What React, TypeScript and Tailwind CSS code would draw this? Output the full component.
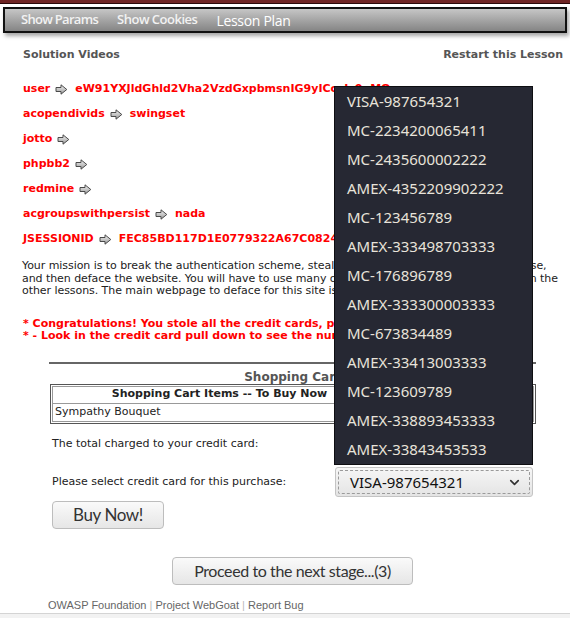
import { ChevronDown } from "lucide-react";

const cookies: [string, string][] = [
  ["user", "eW91YXJldGhld2Vha2VzdGxpbmsnIG9yICcxJz0nMQ=="],
  ["acopendivids", "swingset"],
  ["jotto", ""],
  ["phpbb2", ""],
  ["redmine", ""],
  ["acgroupswithpersist", "nada"],
  ["JSESSIONID", "FEC85BD117D1E0779322A67C082402EB"],
];

const cards = [
  "VISA-987654321",
  "MC-2234200065411",
  "MC-2435600002222",
  "AMEX-4352209902222",
  "MC-123456789",
  "AMEX-333498703333",
  "MC-176896789",
  "AMEX-333300003333",
  "MC-673834489",
  "AMEX-33413003333",
  "MC-123609789",
  "AMEX-338893453333",
  "AMEX-33843453533",
];

function Arrow() {
  return (
    <svg width="13" height="11" viewBox="0 0 13 11" className="shrink-0">
      <defs>
        <linearGradient id="ag" x1="0" y1="0" x2="0" y2="1">
          <stop offset="0" stopColor="#f2f2f2" />
          <stop offset="1" stopColor="#9a9a9a" />
        </linearGradient>
      </defs>
      <polygon
        points="1,3.5 6,3.5 6,0.8 11.8,5.5 6,10.2 6,7.5 1,7.5"
        fill="url(#ag)"
        stroke="#4a4a4a"
        strokeWidth="1"
        strokeLinejoin="round"
      />
    </svg>
  );
}

export default function App() {
  return (
    <div className="relative min-h-[618px] w-full overflow-hidden bg-white font-['DejaVu_Sans',Verdana,sans-serif] text-[11px] text-[#222]">
      <div className="h-[3px] bg-[#6e2424]" />
      <div className="h-px bg-[#2a0808]" />

      {/* nav */}
      <div className="mx-[3px] mt-[3px] flex h-[26px] items-center gap-[19px] border-2 border-[#111] bg-gradient-to-b from-[#c6c6c6] to-[#858585] pl-[16px] font-['Open_Sans',sans-serif] shadow-[2px_3px_4px_rgba(0,0,0,0.35)]">
        <span className="text-[13px] font-semibold tracking-[-0.7px] text-[#f2f2f2]">Show Params</span>
        <span className="text-[13px] font-semibold tracking-[-0.5px] text-[#f2f2f2]">Show Cookies</span>
        <span className="text-[14px] tracking-[-0.3px] text-white">Lesson Plan</span>
      </div>

      <div className="mt-[15px] flex justify-between pl-[23px] pr-[7px] font-bold leading-[13px] text-[#555]">
        <span>Solution Videos</span>
        <span>Restart this Lesson</span>
      </div>

      {/* cookies */}
      <div className="mt-[16px] pl-[23px] font-bold text-[#f00]">
        {cookies.map(([k, v]) => (
          <div key={k} className="flex h-[25px] items-center gap-[5px] whitespace-nowrap">
            <span>{k}</span>
            <Arrow />
            {v && <span className="ml-[2px]">{v}</span>}
          </div>
        ))}
      </div>

      <p className="mt-[8px] pl-[22px] pr-[2px] leading-[12.5px] tracking-[-0.06px]">
        Your mission is to break the authentication scheme, steal all the credit cards from the database,
        and then deface the website. You will have to use many of the techniques you have learned in the
        other lessons. The main webpage to deface for this site is 'webgoat_challenge_guest.jsp'
      </p>

      <div className="mt-[20px] pl-[23px] font-bold leading-[12.5px] text-[#f00]">
        <div>* Congratulations! You stole all the credit cards, proceed to the next stage.</div>
        <div>* - Look in the credit card pull down to see the numbers.</div>
      </div>

      {/* shopping cart */}
      <div className="ml-[49px] mt-[19px] w-[487px]">
        <div className="h-[2px] bg-[#666]" />
        <div className="mt-[6px] text-center text-[12px] font-bold leading-[14px] text-[#555]">Shopping Cart</div>
        <div className="ml-px border border-[#555] p-px">
          <div className="flex h-[18px] border border-[#999]">
            <div className="flex w-[334px] items-center justify-center border-r border-[#999] font-bold">
              Shopping Cart Items -- To Buy Now
            </div>
            <div className="flex-1 border-r border-[#999] text-center font-bold">Price</div>
            <div className="flex-1 text-center font-bold">Quantity</div>
          </div>
          <div className="flex h-[18px] border-x border-b border-[#999]">
            <div className="flex w-[334px] items-center pl-[2px]">Sympathy Bouquet</div>
            <div className="flex-1 text-right">69.99</div>
          </div>
        </div>
      </div>

      {/* form */}
      <div className="ml-[52px] mt-[8px] flex h-[26px] items-center">The total charged to your credit card:</div>
      <div className="ml-[52px] mt-[9px] flex h-[31px] items-center">
        <span className="w-[283px]">Please select credit card for this purchase:</span>
        <div className="relative">
          <div className="flex h-[30px] w-[198px] items-center justify-between rounded-[3px] border border-[#c4c4c4] bg-gradient-to-b from-[#f6f6f6] to-[#e4e4e4] p-[2px]">
            <div className="flex h-full w-full items-center justify-between rounded-[2px] border border-dashed border-[#9a9a9a] pl-[11px] pr-[7px] font-['Noto_Sans',sans-serif] text-[15px] text-[#111]">
              <span>VISA-987654321</span>
              <ChevronDown size={15} strokeWidth={2.6} className="text-[#333]" />
            </div>
          </div>
          <div className="absolute bottom-full left-[-1px] mb-[2px] w-[199px] border border-[#0e0e12] bg-[#262833] font-['Noto_Sans',sans-serif] text-[15px] text-[#e8e3da]">
            {cards.map((c) => (
              <div key={c} className="flex h-[29px] items-center pl-[12px]">
                {c}
              </div>
            ))}
          </div>
        </div>
      </div>
      <button className="ml-[52px] mt-[3px] h-[28px] w-[112px] rounded-[4px] border border-[#bdbdbd] bg-gradient-to-b from-[#fafafa] to-[#e6e6e6] font-['Lato',sans-serif] text-[17px] tracking-[-0.4px] text-[#333]">
        Buy Now!
      </button>

      <div className="mt-[28px] flex justify-center pl-[22px] pr-[7px]">
        <button className="h-[28px] w-[241px] rounded-[4px] border border-[#bdbdbd] bg-gradient-to-b from-[#fafafa] to-[#e6e6e6] font-['Lato',sans-serif] text-[16px] tracking-[-0.4px] text-[#333]">
          Proceed to the next stage...(3)
        </button>
      </div>

      <div className="mt-[14px] pl-[48px] font-['Liberation_Sans',sans-serif] text-[11px] leading-[13px] text-[#666]">
        OWASP Foundation <span className="text-[#bbb]">|</span> Project WebGoat{" "}
        <span className="text-[#bbb]">|</span> Report Bug
      </div>
      <div className="mt-[1px] h-px bg-[#d4d4d4]" />
      <div className="h-[20px] bg-[#f2f2f2]" />
    </div>
  );
}
